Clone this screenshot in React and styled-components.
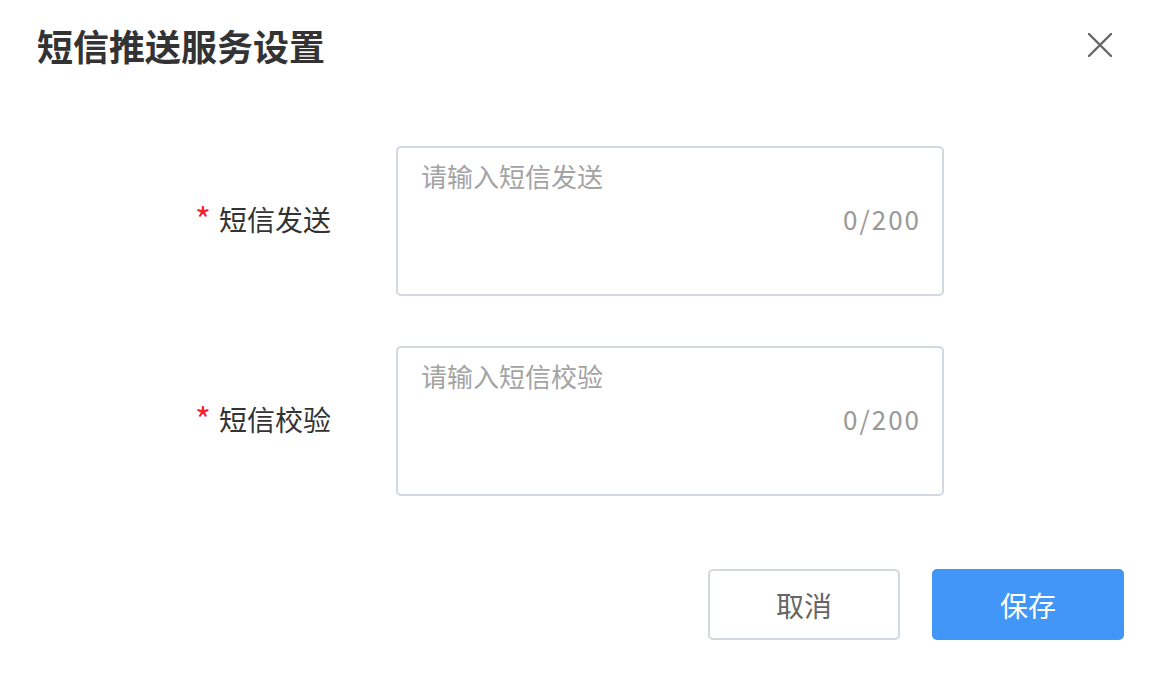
import React from "react";
import styled, { createGlobalStyle } from "styled-components";

const GlobalStyle = createGlobalStyle`
  html, body {
    margin: 0;
    padding: 0;
    background: #ffffff;
  }
  body {
    font-family: "Noto Sans CJK SC", "Noto Sans", sans-serif;
    color: #333333;
  }
`;

const Dialog = styled.div`
  width: 1170px;
  height: 688px;
  background: #fff;
  box-sizing: border-box;
`;

const Header = styled.div`
  height: 90px;
  display: flex;
  align-items: center;
  justify-content: space-between;
  padding: 0 58px 0 37px;
`;

const Title = styled.h2`
  margin: 0;
  font-size: 36px;
  font-weight: 700;
  color: #333;
  line-height: 1;
`;

const CloseButton = styled.button`
  width: 24px;
  height: 24px;
  padding: 0;
  border: none;
  background: none;
  cursor: pointer;
  display: flex;
`;

const Form = styled.div`
  margin-top: 56px;
  display: flex;
  flex-direction: column;
  gap: 50px;
`;

const Row = styled.div`
  display: grid;
  grid-template-columns: 331px 548px;
  column-gap: 65px;
  align-items: center;
`;

const Label = styled.label`
  text-align: right;
  font-size: 28px;
  line-height: 40px;
  color: #333;
  position: relative;
  top: -3px;
`;

const Star = styled.span`
  color: #f5222d;
  margin-right: 8px;
  font-size: 34px;
  position: relative;
  top: 2px;
`;

const Field = styled.div`
  position: relative;
  height: 150px;
`;

const TextArea = styled.textarea`
  width: 100%;
  height: 100%;
  box-sizing: border-box;
  border: 2px solid #d3d8de;
  border-radius: 5px;
  padding: 8px 23px;
  font-family: inherit;
  font-size: 26px;
  line-height: 40px;
  color: #333;
  resize: none;
  outline: none;

  &::placeholder {
    color: #a3a3a3;
  }
`;

const Count = styled.span`
  position: absolute;
  right: 23px;
  top: 55px;
  font-size: 26px;
  line-height: 36px;
  color: #999;
  letter-spacing: 2px;
`;

const Footer = styled.div`
  margin-top: 73px;
  display: flex;
  justify-content: flex-end;
  gap: 32px;
  padding-right: 46px;
`;

const Button = styled.button`
  width: 192px;
  height: 71px;
  box-sizing: border-box;
  border-radius: 5px;
  font-family: inherit;
  font-size: 28px;
  cursor: pointer;
  border: 2px solid ${(p) => (p.$primary ? "#4296f7" : "#d3d8de")};
  background: ${(p) => (p.$primary ? "#4296f7" : "#fff")};
  color: ${(p) => (p.$primary ? "#fff" : "#666")};
`;

const fields = [
  { label: "短信发送", placeholder: "请输入短信发送" },
  { label: "短信校验", placeholder: "请输入短信校验" },
];

export default function App() {
  return (
    <>
      <GlobalStyle />
      <Dialog>
        <Header>
          <Title>短信推送服务设置</Title>
          <CloseButton aria-label="关闭">
            <svg width="24" height="24" viewBox="0 0 24 24">
              <path
                d="M1 1 L23 23 M23 1 L1 23"
                stroke="#666"
                strokeWidth="2.4"
                strokeLinecap="round"
              />
            </svg>
          </CloseButton>
        </Header>
        <Form>
          {fields.map((f) => (
            <Row key={f.label}>
              <Label>
                <Star>*</Star>
                {f.label}
              </Label>
              <Field>
                <TextArea placeholder={f.placeholder} maxLength={200} />
                <Count>0/200</Count>
              </Field>
            </Row>
          ))}
        </Form>
        <Footer>
          <Button>取消</Button>
          <Button $primary>保存</Button>
        </Footer>
      </Dialog>
    </>
  );
}
